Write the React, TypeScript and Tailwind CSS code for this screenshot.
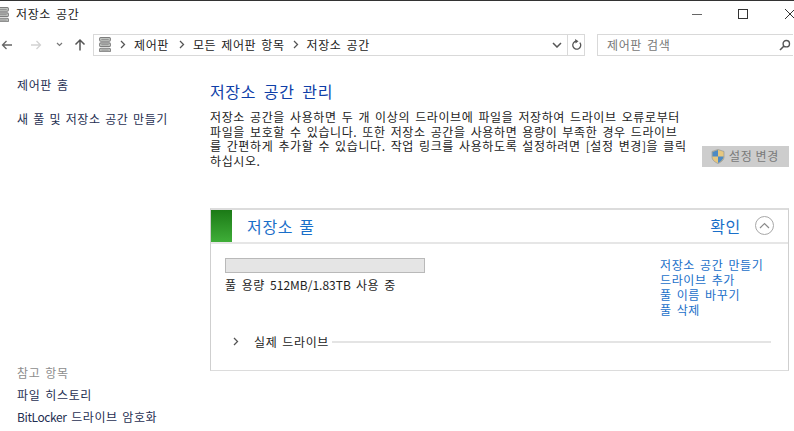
import React from "react";

const font = { fontFamily: '"Noto Sans CJK KR", "Noto Sans", sans-serif' };

function StorageIcon({ size = 14 }: { size?: number }) {
  return (
    <svg width={size * 0.8} height={size} viewBox="0 0 11 14">
      {[0, 5, 10].map((y) => (
        <g key={y}>
          <rect x="0.5" y={y + 0.5} width="10" height="3.4" rx="1" fill="#c9cdc9" stroke="#7d7d7d" />
          <rect x="2" y={y + 1.7} width="7" height="1" fill="#8f8f8f" />
        </g>
      ))}
    </svg>
  );
}

function Chevron() {
  return (
    <svg width="6" height="9" viewBox="0 0 6 9" className="shrink-0">
      <path d="M1 1l3.5 3.5L1 8" fill="none" stroke="#555" strokeWidth="1.3" />
    </svg>
  );
}

function Crumb({ children }: { children: React.ReactNode }) {
  return <span className="text-[#222]">{children}</span>;
}

export default function App() {
  return (
    <div className="flex h-[431px] w-[794px] flex-col overflow-hidden border-t border-[#333] bg-white text-[12px] tracking-[0.6px] text-[#1e1e1e] [word-spacing:1.8px]" style={font}>
      {/* Title bar */}
      <div className="flex h-[31px] shrink-0 items-center pb-[5px]">
        <div className="ml-[-3px] mr-[7px] flex"><StorageIcon size={15} /></div>
        <span className="leading-none text-[#222]">저장소 공간</span>
        <div className="ml-auto flex items-center">
          <svg width="10" height="10" viewBox="0 0 10 10" className="mr-[36px]"><path d="M0 5.500h10" stroke="#666" strokeWidth="1" /></svg>
          <svg width="10" height="10" viewBox="0 0 10 10" className="mr-[37px]"><rect x="0.5" y="0.5" width="9" height="9" fill="none" stroke="#333" /></svg>
          <svg width="10" height="10" viewBox="0 0 10 10" className="mr-[-1px]"><path d="M0 0l10 10M10 0L0 10" stroke="#333" strokeWidth="1" /></svg>
        </div>
      </div>

      {/* Navigation bar */}
      <div className="flex h-[27px] shrink-0 items-center pb-[2px]">
        <svg width="12" height="12" viewBox="0 0 12 12" className="ml-[1px]"><path d="M11 6H1.500M5.500 2L1.500 6l4 4" fill="none" stroke="#666" strokeWidth="1.3" /></svg>
        <svg width="12" height="12" viewBox="0 0 12 12" className="ml-[17px]"><path d="M1 6h9.500M6.500 2l4 4-4 4" fill="none" stroke="#d2d2d2" strokeWidth="1.3" /></svg>
        <svg width="7" height="5" viewBox="0 0 7 5" className="ml-[14px]"><path d="M1 1l2.500 2.500L6 1" fill="none" stroke="#777" strokeWidth="1.2" /></svg>
        <svg width="12" height="13" viewBox="0 0 12 13" className="ml-[11px]"><path d="M6 12.500V2M1.500 6.500L6 2l4.500 4.500" fill="none" stroke="#555" strokeWidth="1.5" /></svg>
        <div className="ml-[7px] flex h-[22px] w-[492px] items-center border border-[#d9d9d9]">
          <div className="ml-[5px] flex"><StorageIcon size={15} /></div>
          <div className="ml-[9px] flex items-center gap-[8px] leading-none">
            <Chevron /><Crumb>제어판</Crumb><span className="ml-[2px] flex"><Chevron /></span><Crumb>모든 제어판 항목</Crumb><Chevron /><Crumb>저장소 공간</Crumb>
          </div>
          <div className="ml-auto flex h-full items-center">
            <svg width="10" height="6" viewBox="0 0 10 6" className="mr-[5px]"><path d="M1 1l4 4 4-4" fill="none" stroke="#555" strokeWidth="1.5" /></svg>
            <div className="flex h-full w-[17px] items-center justify-center border-l border-[#d9d9d9]">
              <svg width="11" height="12" viewBox="0 0 11 12"><path d="M8.800 3.600A4 4 0 1 1 5.500 2.200" fill="none" stroke="#555" strokeWidth="1.3" /><path d="M4 0l3.500 2.200L4.500 4.600z" fill="#555" /></svg>
            </div>
          </div>
        </div>
        <div className="ml-[12px] flex h-[22px] w-[196px] items-center border border-r-0 border-[#d9d9d9] pl-[9px] leading-none text-[#777]">
          제어판 검색
          <svg width="12" height="12" viewBox="0 0 12 12" className="ml-auto mr-[2px]"><circle cx="7.300" cy="4.700" r="3.200" fill="none" stroke="#555" strokeWidth="1.4" /><path d="M5 7l-4 4" stroke="#555" strokeWidth="1.6" /></svg>
        </div>
      </div>

      {/* Main */}
      <div className="flex min-h-0 flex-1">
        <aside className="flex w-[210px] shrink-0 flex-col justify-between pb-[5px] pl-[17px] pt-[17px]">
          <div className="flex flex-col gap-[16px] whitespace-nowrap leading-[18px] text-[#1f2f52]">
            <a>제어판 홈</a>
            <a className="[word-spacing:1.3px]">새 풀 및 저장소 공간 만들기</a>
          </div>
          <div className="flex flex-col gap-[4px] whitespace-nowrap leading-[18px]">
            <span className="text-[#8d8d8d]">참고 항목</span>
            <a className="text-[#1f2f52]">파일 히스토리</a>
            <a className="text-[#1f2f52] [word-spacing:1.3px]"><span className="tracking-[-0.4px]">BitLocker</span> 드라이브 암호화</a>
          </div>
        </aside>

        <main className="min-w-0 flex-1 pr-[5px] pt-[22px]">
          <h1 className="text-[16px] font-normal leading-[20px] text-[#0f3fa8] [word-spacing:3.700px]">저장소 공간 관리</h1>
          <div className="mt-[9px] flex items-end">
            <p className="shrink-0 whitespace-nowrap leading-[14.700px] text-[#222]">
              저장소 공간을 사용하면 두 개 이상의 드라이브에 파일을 저장하여 드라이브 오류로부터<br />
              파일을 보호할 수 있습니다. 또한 저장소 공간을 사용하면 용량이 부족한 경우 드라이브<br />
              를 간편하게 추가할 수 있습니다. 작업 링크를 사용하도록 설정하려면 [설정 변경]을 클릭<br />
              하십시오.
            </p>
            <button className="mb-[2px] ml-auto flex h-[21px] w-[87px] items-center bg-[#cdcdcd] pl-[9px] leading-none text-[#7a7a7a]">
              <svg width="14" height="15" viewBox="0 0 14 15" className="shrink-0">
                <path d="M7 0.500L13 2.500V8c0 3-3 5.200-6 6.500C4 13.200 1 11 1 8V2.500z" fill="#e6c77f" stroke="#8a8f96" strokeWidth="0.6" />
                <path d="M7 1v6.500H1.400V3z" fill="#4e8ac4" />
                <path d="M7 7.500h5.600C12.300 10.500 9.500 13 7 14z" fill="#4e8ac4" />
              </svg>
              <span className="ml-[4px] whitespace-nowrap">설정 변경</span>
            </button>
          </div>

          <section className="mt-[39px] h-[163px] border border-t-2 border-[#dcdcdc] border-l-[#cfcfcf] border-r-[#cfcfcf]">
            <header className="flex h-[34px] items-center border-b-2 border-[#e6e6e6]">
              <div className="h-full w-[21px] bg-gradient-to-b from-[#1b7a16] to-[#3fae38]" />
              <span className="ml-[15px] text-[16px] leading-none tracking-[0.7px] text-[#1a6fc9]">저장소 풀</span>
              <span className="ml-auto text-[16px] leading-none tracking-[0.7px] text-[#1a6fc9]">확인</span>
              <span className="ml-[14px] mr-[14px] flex h-[19px] w-[19px] items-center justify-center rounded-full border border-[#a8a8a8]">
                <svg width="11" height="7" viewBox="0 0 11 7"><path d="M1 6l4.500-4.500L10 6" fill="none" stroke="#8a8a8a" strokeWidth="1.2" /></svg>
              </span>
            </header>
            <div className="flex pl-[14px] pr-[8px] pt-[14px]">
              <div className="w-[200px]">
                <div className="h-[15px] w-[200px] border border-[#b9b9b9] bg-[#e5e5e5]" />
                <div className="mt-[3px] whitespace-nowrap leading-[17px] text-[#1e1e1e]">풀 용량 <span className="tracking-normal">512MB/1.83TB</span> 사용 중</div>
              </div>
              <div className="ml-auto mt-[-1px] flex w-[120px] flex-col whitespace-nowrap leading-[15px] text-[#1a6fc9]">
                <a>저장소 공간 만들기</a>
                <a>드라이브 추가</a>
                <a>풀 이름 바꾸기</a>
                <a>풀 삭제</a>
              </div>
            </div>
            <div className="mt-[16px] flex items-center pl-[22px] pr-[17px]">
              <Chevron />
              <span className="ml-[15px] mr-[3px] whitespace-nowrap leading-[18px] text-[#222]">실제 드라이브</span>
              <div className="h-[2px] flex-1 bg-[#e4e4e4]" />
            </div>
          </section>
        </main>
      </div>
    </div>
  );
}
